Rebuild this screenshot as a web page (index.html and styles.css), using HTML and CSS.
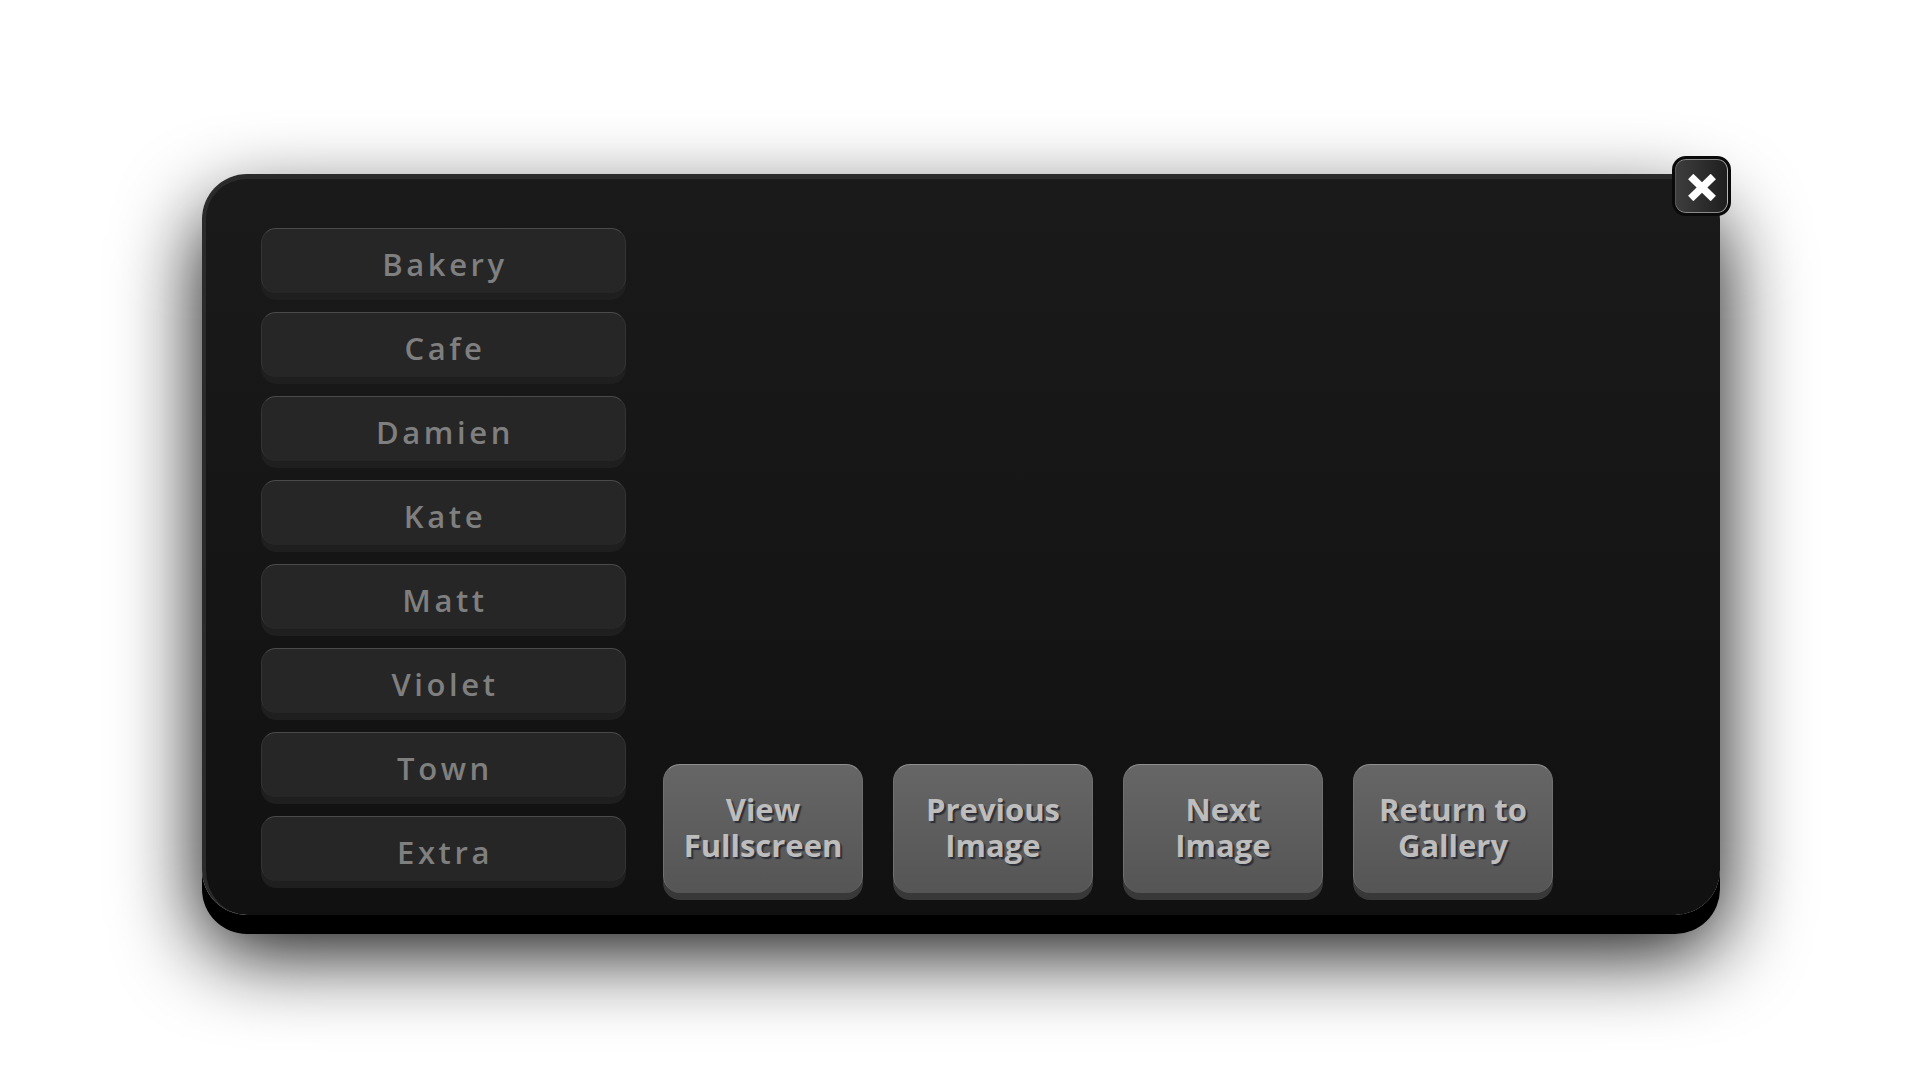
FILE: index.html
```html
<!DOCTYPE html>
<html lang="en">
<head>
<meta charset="utf-8">
<title>Gallery</title>
<link rel="stylesheet" href="styles.css">
</head>
<body>
<div class="stage">
  <div class="panel">
    <nav class="list">
      <button class="list-btn">Bakery</button>
      <button class="list-btn">Cafe</button>
      <button class="list-btn">Damien</button>
      <button class="list-btn">Kate</button>
      <button class="list-btn">Matt</button>
      <button class="list-btn">Violet</button>
      <button class="list-btn">Town</button>
      <button class="list-btn">Extra</button>
    </nav>
    <div class="actions">
      <button class="act-btn">View<br>Fullscreen</button>
      <button class="act-btn">Previous<br>Image</button>
      <button class="act-btn">Next<br>Image</button>
      <button class="act-btn">Return to<br>Gallery</button>
    </div>
    <button class="close" aria-label="Close">
      <svg width="28" height="27" viewBox="0 0 28 27"><line x1="2.7" y1="2.5" x2="25.3" y2="24.5" stroke="#fff" stroke-width="7.5"/><line x1="25.3" y1="2.5" x2="2.7" y2="24.5" stroke="#fff" stroke-width="7.5"/></svg>
    </button>
  </div>
</div>
</body>
</html>
```
FILE: styles.css
```css
html, body {
  margin: 0;
  padding: 0;
  background: #fff;
}
body {
  width: 1920px;
  height: 1080px;
  overflow: hidden;
  font-family: "Open Sans", "DejaVu Sans", sans-serif;
}
.stage {
  padding-top: 174px;
  padding-left: 202px;
}
.panel {
  position: relative;
  box-sizing: border-box;
  width: 1518px;
  height: 741px;
  border-radius: 45px;
  background: linear-gradient(#1a1a1a, #111111);
  border-top: 5px solid #2a2a2a;
  border-left: 4px solid #2a2a2a;
  padding: 49px 0 22px 55px;
  display: grid;
  grid-template-columns: 365px 1fr;
  column-gap: 37px;
  box-shadow: 0 19px 0 #000, 0 36px 84px rgba(0,0,0,0.97);
}
.list {
  display: flex;
  flex-direction: column;
  gap: 19px;
}
.list-btn {
  height: 65px;
  margin: 0;
  padding: 6px 0 0 0;
  box-sizing: border-box;
  border: 1px solid #343434;
  border-top: 1px solid #4a4a4a;
  border-bottom: none;
  border-radius: 15px;
  background: #262626;
  box-shadow: 0 7px 0 #1f1f1f;
  color: #7f7f7f;
  font-family: "Open Sans", "DejaVu Sans", sans-serif;
  font-weight: 600;
  font-size: 31px;
  letter-spacing: 3.6px;
  line-height: 1;
  text-indent: 3px;
}
.actions {
  display: flex;
  align-items: flex-end;
  gap: 30px;
}
.act-btn {
  width: 200px;
  height: 129px;
  margin: 0;
  padding: 0 0 5px 0;
  box-sizing: border-box;
  border: 1px solid #707070;
  border-top: 1px solid #8e8e8e;
  border-bottom: none;
  border-radius: 17px;
  background: linear-gradient(#666666, #555555);
  box-shadow: 0 7px 0 #383838;
  color: #bdbdbd;
  font-family: "Open Sans", "DejaVu Sans", sans-serif;
  font-weight: 700;
  font-size: 31px;
  line-height: 36px;
  text-shadow: 2px 2px 1px rgba(40,42,52,0.9);
}
.close {
  position: absolute;
  top: -23px;
  right: -11px;
  width: 59px;
  height: 60px;
  margin: 0;
  padding: 0;
  box-sizing: border-box;
  border: 3px solid #0a0a0a;
  border-radius: 14px;
  background: linear-gradient(to right, #3e3e3e, #1e1e1e);
  box-shadow: inset -1px 0 0 #b5b5b5, inset 0 1px 0 #8a8a8a, inset 0 -1px 0 #8a8a8a, inset 1px 0 0 #555;
  display: flex;
  align-items: center;
  justify-content: center;
}
.close svg {
  display: block;
  margin-top: 2px;
}
```
